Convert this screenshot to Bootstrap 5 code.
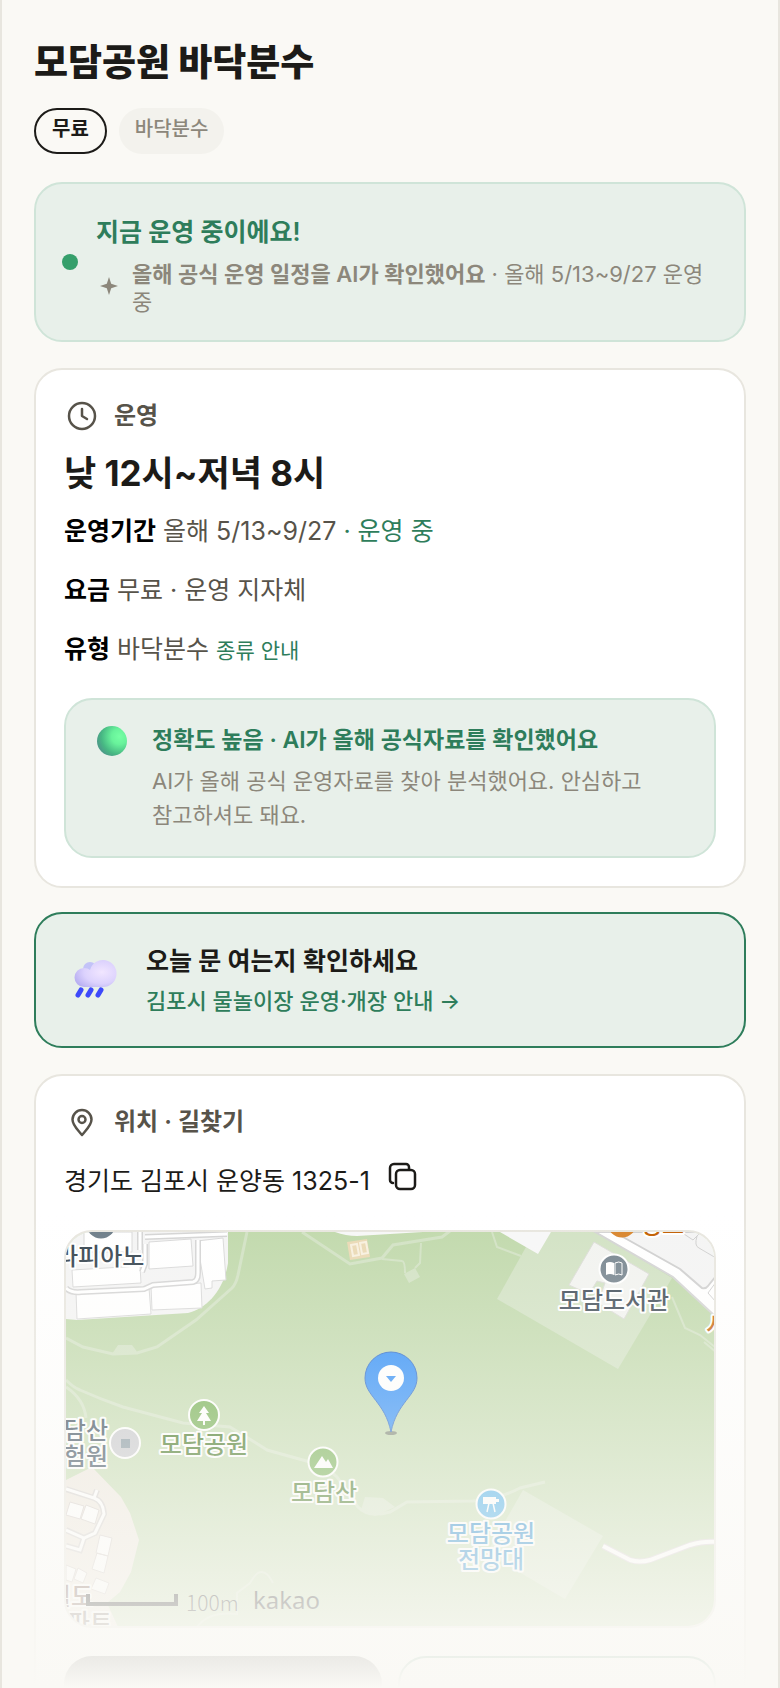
<!DOCTYPE html>
<html lang="ko">
<head>
<meta charset="utf-8">
<meta name="viewport" content="width=device-width, initial-scale=1">
<title>모담공원 바닥분수</title>
<link href="https://cdn.jsdelivr.net/npm/bootstrap@5.3.0/dist/css/bootstrap.min.css" rel="stylesheet">
<style>
:root{--paper:#faf9f5;--ink:#1c1b18;--soft:#57534a;--faint:#8c877b;--line:#e8e6df;--green:#2e7d5b;--mint:#e8f0ea;--mint-line:#cfe4d8}
body{background:var(--paper);color:var(--ink);font-family:Inter,"Noto Sans CJK KR",sans-serif;font-size:25px;line-height:36px;word-break:keep-all}
.page{height:100vh;overflow:hidden;position:relative;border:solid var(--line);border-width:0 2px;padding:37px 32px 0}
/* fades the bottom of the preview into the page colour */
.page::after{content:"";position:absolute;inset:auto 0 0 0;height:28vh;background:linear-gradient(rgba(250,249,245,0),#faf9f5);pointer-events:none}
h1{font-size:37px;line-height:52px;font-weight:800;margin-bottom:19px}
.chips{gap:12px;margin-bottom:28px}
.chip{font-size:20px;line-height:28px;height:46px;padding:5px 14px;border:2px solid transparent;border-radius:23px}
.chip-free{border-color:var(--ink);font-weight:600;padding:5px 16px}
.chip-kind{background:#f3f2ed;color:var(--faint);font-weight:500}
.panel{border:2px solid var(--line);border-radius:28px;background:#fff;padding:28px;margin-bottom:26px}
.mint{background:var(--mint);border-color:var(--mint-line)}
.status-panel{padding:30px 26px 24px;gap:18px}
.dot{width:16px;height:16px;border-radius:50%;background:#359f6b;margin-bottom:6px}
.lead-line{font-size:25px;font-weight:600}
.note{font-size:22px;line-height:28px;color:var(--faint)}
.note-row{margin-top:10px;gap:12px}
.green{color:var(--green)}
.soft{color:var(--soft)}
.heading{font-size:24px;line-height:36px;font-weight:600;gap:16px;color:var(--soft)}
.hours{font-size:35px;line-height:48px;font-weight:700;margin:15px 0 16px}
.hours-panel{margin-bottom:24px}
.fact{margin-bottom:23px}
.fact b{font-weight:600}
.kind-link{font-size:21px}
.trust{padding:22px 30px 24px;margin-bottom:0;margin-top:29px;gap:24px}
.trust-title{font-size:23px;font-weight:600}
.trust-note{font-size:22px;line-height:34px;color:var(--faint);margin-top:6px;max-width:500px}
.check{padding:29px 34px 27px;gap:24px;border-color:var(--green);color:var(--ink)}
.check-sub{font-size:22px;font-weight:500;margin-top:4px}
.address{margin:20px 0 28px;gap:18px}
.copy{line-height:0}
.map-frame{border:2px solid var(--line);border-radius:28px;overflow:hidden;margin-bottom:28px}
.map-frame svg{display:block;width:100%;height:auto}
.map-frame text{font-family:"Noto Sans CJK KR",sans-serif;font-size:24px;font-weight:500;stroke:#fff;stroke-width:4px;paint-order:stroke;stroke-linejoin:round}
.map-frame .scale-text{font-size:21px;font-weight:300;stroke:none}
.map-frame .maker-text{font-family:"Noto Sans",sans-serif;font-size:24px;font-weight:400;stroke:none}
.cta{height:92px;border-radius:28px;font-size:24px;font-weight:600}
.cta-dark{background:var(--ink);color:#fff}
.cta-light{border:2px solid var(--green);color:var(--green)}
</style>
</head>
<body>
<main class="page">
  <h1>모담공원 바닥분수</h1>
  <div class="chips d-flex">
    <span class="chip chip-free">무료</span>
    <span class="chip chip-kind">바닥분수</span>
  </div>

  <section class="panel mint status-panel d-flex align-items-center">
    <span class="dot flex-shrink-0"></span>
    <div>
      <div class="lead-line green">지금 운영 중이에요!</div>
      <div class="note note-row d-flex align-items-center">
        <svg class="flex-shrink-0" width="24" height="24" viewBox="0 0 24 24" fill="currentColor" aria-hidden="true"><path d="M13 1l2.200 6.800L22 10l-6.800 2.200L13 19l-2.200-6.800L4 10l6.800-2.200z"/></svg>
        <span><b class="fw-semibold">올해 공식 운영 일정을 AI가 확인했어요</b> · 올해 5/13~9/27 운영 중</span>
      </div>
    </div>
  </section>

  <section class="panel hours-panel">
    <h2 class="heading d-flex align-items-center mb-0">
      <svg width="34" height="34" viewBox="0 0 34 34" fill="none" stroke="currentColor" stroke-width="2.500" stroke-linecap="round" stroke-linejoin="round" aria-hidden="true"><circle cx="18" cy="17" r="13"/><path d="M18 10v7l5 3"/></svg>
      운영
    </h2>
    <div class="hours">낮 12시~저녁 8시</div>
    <div class="fact soft"><b class="text-black">운영기간</b> 올해 5/13~9/27 <span class="green">· 운영 중</span></div>
    <div class="fact soft"><b class="text-black">요금</b> 무료 · 운영 지자체</div>
    <div class="fact soft"><b class="text-black">유형</b> 바닥분수 <a href="#kinds" class="kind-link green text-decoration-none">종류 안내</a></div>
    <div class="panel mint trust d-flex align-items-start">
      <svg class="flex-shrink-0 mt-1" width="32" height="32" viewBox="0 0 32 32" aria-hidden="true">
        <defs>
          <radialGradient id="ball" cx=".75" cy=".35" r=".75"><stop offset="0" stop-color="#76ffa4"/><stop offset=".35" stop-color="#68f29b"/><stop offset=".8" stop-color="#47b783"/><stop offset="1" stop-color="#4c9d88"/></radialGradient>
        </defs>
        <circle cx="16" cy="15" r="15" fill="url(#ball)"/>
      </svg>
      <div>
        <div class="trust-title green">정확도 높음 · AI가 올해 공식자료를 확인했어요</div>
        <div class="trust-note">AI가 올해 공식 운영자료를 찾아 분석했어요. 안심하고 참고하셔도 돼요.</div>
      </div>
    </div>
  </section>

  <a href="#notice" class="panel mint check d-flex align-items-center text-decoration-none">
    <svg class="flex-shrink-0" width="52" height="52" viewBox="1 5 52 52" aria-hidden="true">
      <defs><radialGradient id="puff" cx=".65" cy=".45" r=".7"><stop offset="0" stop-color="#f1e6ff"/><stop offset=".6" stop-color="#dcd2fd"/><stop offset="1" stop-color="#b9b0f2"/></radialGradient></defs>
      <circle cx="21" cy="19" r="7" fill="#c3c3f8"/>
      <path d="M15 37a9.500 9.500 0 0 1 0-19q4 0 6 2a13.500 13.500 0 1 1 13 17z" fill="url(#puff)"/>
      <path d="M12 40l-3 5M22 40l-3 5M32 40l-3 5" stroke="#3d49fa" stroke-width="5" stroke-linecap="round"/>
    </svg>
    <span>
      <span class="lead-line d-block">오늘 문 여는지 확인하세요</span>
      <span class="check-sub green d-block">김포시 물놀이장 운영·개장 안내 →</span>
    </span>
  </a>

  <section class="panel">
    <h2 class="heading d-flex align-items-center mb-0">
      <svg width="34" height="34" viewBox="0 0 34 34" fill="none" stroke="currentColor" stroke-width="2.500" stroke-linejoin="round" aria-hidden="true"><path d="M18 30C14 25 8.500 20.500 8.500 14.500a9.500 9.500 0 0 1 19 0C27.500 20.500 22 25 18 30z"/><circle cx="18" cy="14.500" r="3.500"/></svg>
      위치 · 길찾기
    </h2>
    <div class="address d-flex align-items-center">
      <span>경기도 김포시 운양동 1325-1</span>
      <button type="button" class="copy btn p-0 pb-2 border-0" aria-label="주소 복사">
        <svg width="34" height="34" viewBox="0 0 34 34" fill="none" stroke="#1c1b18" stroke-width="2.500" stroke-linecap="round" stroke-linejoin="round" aria-hidden="true"><rect x="8" y="10" width="19" height="19" rx="4"/><path d="M5 23a3 3 0 0 1-3-3V8a4 4 0 0 1 4-4h12a3 3 0 0 1 3 3v2"/></svg>
      </button>
    </div>

    <div class="map-frame">
      <svg viewBox="0 0 648 394" role="img" aria-label="모담공원 지도">
        <rect width="648" height="394" fill="#c1d9ac"/>
        <!-- lawns -->
        <g fill="#d2e2c4">
          <path d="M460 15L431 67l121 70 54-91L530 0h-45z"/>
          <path d="M457 258l80 46-38 63-78-46z"/>
          <path d="M338 42l11-6 5 9-11 6zM46 122l6-9h14l6 8zM299 265l18 1 12 9-20 9-14-6z"/>
        </g>
        <!-- paths -->
        <g fill="none" stroke="#d2e2c4" stroke-width="3">
          <path d="M0 106l17 9 30 7 24-1 20-6 39-27 36-32q4-4 6-13l9-43M236 0l48 32 32-6 11-13 49-8 8-6M0 148q8 8 14 10 20 9 43 17l60 16 47 4q15 9 37 23l43 12q16 4 27 15l21 30q10 11 32 5l17-10 66-1q24-1 47-13l25-6M0 155q18 12 20 31"/>
          <path stroke-width="2" d="M316 27l20 2q3 0 3 12M355 11l-1 20-5 5M426 0l5 15 24 9M606 65l13 31 15 7 15 12M638 110l12 10M131 395q12-16 40-13v-21l13-10q12-22 23 0"/>
        </g>
        <!-- town block, north-west -->
        <path d="M0 0h162v31c-4 26-20 45-40 50L11 88 0 87z" fill="#f4f4f4"/>
        <g fill="#fff" stroke="#d8d8d8">
          <path d="M83 10l42-3 2 27-44 3zM10 60l73-4 2 26-74 5zM85 54l50-3 1 25-50 2zM131 9l26-3 3 42-14 1v7l-7 1zM6 38l68-4 1 17-68 4zM18 0h48v20H18z"/>
        </g>
        <path d="M0 56q5 5 15 4l63-3 9-4 40-3q5-1 5-9V8M79 5l82-3M79 12v20l-3 8M74 0v18" fill="none" stroke="#d4d4d4" stroke-width="6"/>
        <path d="M0 56q5 5 15 4l63-3 9-4 40-3q5-1 5-9V8M79 5l82-3M79 12v20l-3 8M74 0v18" fill="none" stroke="#fff" stroke-width="3"/>
        <!-- buildings and the main road, north-east -->
        <path d="M434 0l38 22L485 0zM269 0q11 4 22 4L357 0z" fill="#f7f7f7"/>
        <path d="M281 10l20-3 3 18-20 3z" fill="#ead9b4"/>
        <path d="M285 13l6-1 2 11-6 1zM294 11l6-1 2 11-6 1z" fill="none" stroke="#f8f0df" stroke-width="2"/>
        <path d="M528 10l55 32-25 45-26-16 7-20-8-2-8 13-20-9z" fill="#f2f3f0" stroke="#dcdcd8"/>
        <path d="M529 0l78 45 43 40V0z" fill="#fff" stroke="#d4d4d4" stroke-width="2"/>
        <path d="M557 5l57 32 22 19q4 1 6-2l8-10V0H550z" fill="#f4f4f4" stroke="#cfcfcf" stroke-width="2"/>
        <path d="M615 0l12 8 8-8M631 4q-3 10 2 12l17 10M650 50l-8 11 8 9" fill="none" stroke="#cfcfcf"/>
        <!-- country road -->
        <path d="M537 314l27 14q10 3 20 0l40-15q14-4 26-3" fill="none" stroke="#d8cfd4" stroke-width="6"/>
        <path d="M537 314l27 14q10 3 20 0l40-15q14-4 26-3" fill="none" stroke="#fff" stroke-width="4"/>
        <!-- apartments, south-west -->
        <path d="M0 248l26-13 29 30 9 16 9 27-8 32-11 20-13 11 11 24H0z" fill="#ede6dc"/>
        <g fill="none" stroke="#d0ccca" stroke-width="6"><path d="M0 257l28 9q9 3 10 16l-9 19-11 5-18-8M28 266l3-8M18 306l-4 12-14-4"/></g>
        <path d="M0 257l28 9q9 3 10 16l-9 19-11 5-18-8M28 266l3-8M18 306l-4 12-14-4" fill="none" stroke="#fff" stroke-width="3"/>
        <g fill="#fff" stroke="#d0c8c4"><path d="M4 270l14 4-4 13-14-4zM20 273l13 5-4 14-14-5zM34 303l12 3-4 18-12-3zM31 321l11 3-4 17-12-4zM0 333l10 4-4 13-6-2zM12 336l9 5-4 10-9-4zM30 346l13 5-4 11-14-5z"/></g>

        <!-- places -->
        <circle cx="35" cy="-8" r="14.500" fill="#6d7d88"/>
        <text x="-10" y="33" fill="#36444f">라피아노</text>
        <circle cx="556" cy="-9" r="14.500" fill="#d8852c"/>
        <text x="574" y="1" fill="#c25e00">명모</text>
        <text x="640" y="102" fill="#c8660f">시</text>

        <circle cx="548" cy="37" r="14.500" fill="#77858f" stroke="#fff" stroke-width="2"/>
        <path d="M540 31q4-2 8 0v12q-4-2-8 0z" fill="#fff"/><path d="M549 31q4-2 7 0v12q-3-2-7 0z" fill="none" stroke="#fff"/>
        <text x="548" y="77" text-anchor="middle" fill="#414d58">모담도서관</text>

        <circle cx="138" cy="183" r="15" fill="#6eac4a" stroke="#fff" stroke-width="2"/>
        <path d="M138 174l5 7h-3l5 8h-6v4h-2v-4h-6l5-8h-3z" fill="#fff"/>
        <text x="138" y="221" text-anchor="middle" fill="#346b11">모담공원</text>

        <circle cx="257" cy="230" r="14.500" fill="#6eac4a" stroke="#fff" stroke-width="2"/>
        <path d="M248 236l8-12 4 6 2-3 5 9z" fill="#fff"/>
        <text x="258" y="269" text-anchor="middle" fill="#346b11">모담산</text>

        <circle cx="59" cy="211" r="15" fill="#c3c4c9" stroke="#fff" stroke-width="2"/>
        <path d="M55 207h9v9h-9z" fill="#7a8d98"/>
        <text x="42" y="207" text-anchor="end" fill="#2c3f50">모담산</text>
        <text x="42" y="233" text-anchor="end" fill="#2c3f50">시험원</text>

        <circle cx="425" cy="272" r="14.500" fill="#38a7e8" stroke="#fff" stroke-width="2"/>
        <path d="M417 265h13v2h3v3h-3v2h-13z" fill="#fff"/><path d="M423 271l-2 9M427 271l2 9" stroke="#fff" stroke-width="1.500"/>
        <text x="425" y="310" text-anchor="middle" fill="#0c7dc8">모담공원</text>
        <text x="425" y="336" text-anchor="middle" fill="#0c7dc8">전망대</text>

        <text x="27" y="373" text-anchor="end" fill="#6b4a40">월도</text>
        <text x="46" y="399" text-anchor="end" fill="#6b5d55">아파트</text>

        <!-- scale and map maker -->
        <path d="M22 362v10h88v-10" fill="none" stroke="#000" stroke-width="4"/>
        <text x="120" y="379" class="scale-text">100m</text>
        <text x="187" y="377" class="maker-text">kakao</text>

        <!-- pin -->
        <ellipse cx="325" cy="201" rx="6" ry="2" fill="#444" opacity=".6"/>
        <path d="M325 200c-6-30-26-36-26-54a26 26 0 0 1 52 0c0 18-20 24-26 54z" fill="#2a8bf7" stroke="#2566c8"/>
        <circle cx="325" cy="146" r="13" fill="#fff"/><path d="M320 144h10l-5 6z" fill="#2a8bf7"/>
      </svg>
    </div>

    <div class="row gx-3">
      <div class="col-6"><button type="button" class="cta cta-dark btn w-100" aria-label="길찾기"></button></div>
      <div class="col-6"><button type="button" class="cta cta-light btn w-100" aria-label="지도 보기"></button></div>
    </div>
  </section>
</main>
<script src="https://cdn.jsdelivr.net/npm/bootstrap@5.3.0/dist/js/bootstrap.bundle.min.js"></script>
</body>
</html>
